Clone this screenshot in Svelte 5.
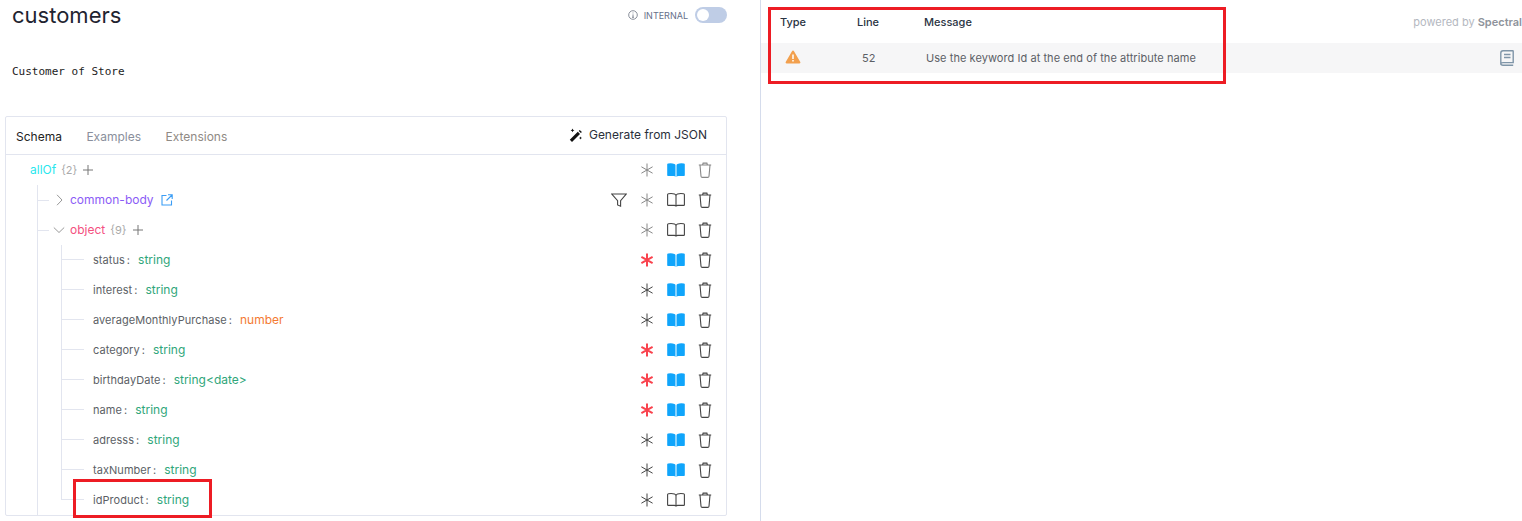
<script>
	const props = [
		{ name: 'status', type: 'string', required: true, described: true },
		{ name: 'interest', type: 'string', described: true },
		{ name: 'averageMonthlyPurchase', type: 'number', described: true },
		{ name: 'category', type: 'string', required: true, described: true },
		{ name: 'birthdayDate', type: 'string<date>', required: true, described: true },
		{ name: 'name', type: 'string', required: true, described: true },
		{ name: 'adresss', type: 'string', described: true },
		{ name: 'taxNumber', type: 'string', described: true },
		{ name: 'idProduct', type: 'string' }
	];
</script>

{#snippet asterisk(required = false, light = false)}
	<svg class="ico" class:red={required} class:light viewBox="0 0 16 16" width="16" height="16" fill="none" stroke="currentColor" stroke-width={required ? 2 : 1}>
		<path d="M8 1.500v13M2.400 4.800l11.200 6.400M13.600 4.800L2.400 11.200" />
	</svg>
{/snippet}

{#snippet book(filled = false)}
	<svg class="ico" class:blue={filled} viewBox="0 0 18 16" width="18" height="16">
		{#if filled}
			<path fill="currentColor" d="M1.200 1.500Q5 1 7.500 2q1 .4 1 1.400V15q-.5-1-1.800-1H1q-.8 0-.8-.8V2.300q0-.7 1-.8zM16.800 1.500Q13 1 10.500 2q-1 .4-1 1.400V15q.5-1 1.800-1H17q.8 0 .8-.8V2.300q0-.7-1-.8z" />
		{:else}
			<path fill="none" stroke="currentColor" stroke-width="1.100" d="M1.500 1.700q4-.4 6 .3 1.500.5 1.500 2v10.400q-.4-1-1.700-1H1.300q-.7 0-.7-.7V2.500q0-.7.900-.8zM16.500 1.700q-4-.4-6 .3Q9 2.500 9 4v10.400q.4-1 1.700-1h6q.7 0 .7-.7V2.500q0-.7-.9-.8z" />
		{/if}
	</svg>
{/snippet}

{#snippet trash(light = false)}
	<svg class="ico" class:light viewBox="0 0 14 16" width="14" height="16" fill="none" stroke="currentColor" stroke-width="1.100">
		<path d="M.8 3h12.400M4.600 3l.5-1.900h3.800L9.400 3M2 3l1 11.200q.1 1.200 1.300 1.200h5.400q1.200 0 1.300-1.200L12 3" />
	</svg>
{/snippet}

{#snippet actions(required, described, lightTrash = false, lightStar = false)}
	<div class="actions">
		<span class="act">{@render asterisk(required, lightStar)}</span>
		<span class="act">{@render book(described)}</span>
		<span class="act">{@render trash(lightTrash)}</span>
	</div>
{/snippet}

<div class="page">
	<section class="left">
		<header class="title-row">
			<h1>customers</h1>
			<div class="internal">
				<svg viewBox="0 0 10 10" width="10" height="10" fill="none" stroke="#6b7280" stroke-width=".8">
					<circle cx="5" cy="5" r="4.300" />
					<path d="M5 4.400v2.800M4 7.300h2M5 2.500v.9" />
				</svg>
				<span>INTERNAL</span>
				<span class="toggle"><i></i></span>
			</div>
		</header>
		<p class="desc">Customer of Store</p>

		<div class="card">
			<div class="tabs">
				<span class="tab on">Schema</span>
				<span class="tab">Examples</span>
				<span class="tab ext">Extensions</span>
				<span class="gen">
					<svg viewBox="0 0 14 14" width="14" height="14" fill="#111">
						<path d="M.8 11.800L8.800 3.800l2.200 2.200-8 8zM9.700 2.900l1-1 2.200 2.200-1 1z" />
						<path d="M3.500.5l.6 1.300 1.300.6-1.300.6-.6 1.300-.6-1.300-1.300-.6 1.300-.6zM11.500 8.500l.5 1 1 .5-1 .5-.5 1-.5-1-1-.5 1-.5z" />
					</svg>
					Generate from JSON
				</span>
			</div>

			<div class="tree">
				<div class="row root">
					<span class="allof label">allOf</span>
					<span class="count">{'{2}'}</span>
					<svg class="plus" viewBox="0 0 10 10" width="10" height="10"><path d="M5 0v10M0 5h10" stroke="#777" fill="none" /></svg>
					{@render actions(false, true, true, true)}
				</div>

				<div class="level1">
					<div class="row">
						<span class="dash"></span>
						<svg class="chev" viewBox="0 0 12 12" width="12" height="12"><path d="M4 .8l5 5.200-5 5.200" stroke="#999" fill="none" /></svg>
						<span class="ref label">common-body</span>
						<svg class="ext-link" viewBox="0 0 12 12" width="12" height="12" fill="none" stroke="#3b9df5" stroke-width="1.100">
							<path d="M5.500 1.500H1v9.500h9.500V6.500M7 .8h4.200V5M11 1L5.500 6.500" />
						</svg>
						<svg class="funnel" viewBox="0 0 16 14" width="16" height="14" fill="none" stroke="#444" stroke-width="1.100">
							<path d="M.8 1h14.400L9.600 7.600v5.600L6.600 12V7.600z" />
						</svg>
						{@render actions(false, false, false, true)}
					</div>
					<div class="row">
						<span class="dash"></span>
						<svg class="chev" viewBox="0 0 12 12" width="12" height="12"><path d="M.8 3.500L6 8.500l5.200-5" stroke="#999" fill="none" /></svg>
						<span class="obj label">object</span>
						<span class="count">{'{9}'}</span>
						<svg class="plus" viewBox="0 0 10 10" width="10" height="10"><path d="M5 0v10M0 5h10" stroke="#777" fill="none" /></svg>
						{@render actions(false, false, false, true)}
					</div>

					<div class="level2">
						{#each props as p, i}
							<div class="row prop">
								<span class="branch" class:last={i === props.length - 1}></span>
								<span class="key">{p.name}<span class="colon">:</span></span>
								<span class="type label" class:num={p.type === 'number'}>{p.type}</span>
								{@render actions(p.required, p.described)}
							</div>
						{/each}
					</div>
				</div>
			</div>
		</div>
	</section>

	<section class="right">
		<div class="table-head">
			<span class="th type-col">Type</span>
			<span class="th line-col">Line</span>
			<span class="th">Message</span>
			<span class="powered">powered by <b>Spectral</b></span>
		</div>
		<div class="issue">
			<span class="warn">
				<svg viewBox="0 0 16 14" width="16" height="14">
					<path fill="#f2a04e" d="M8 .6q.7 0 1 .6l6.300 10.900q.6 1.300-.9 1.400H1.600q-1.500-.1-.9-1.400L7 1.200q.3-.6 1-.6z" />
					<path stroke="#fff" stroke-width="1.500" d="M8 4.500v4.400M8 10v1.500" />
				</svg>
			</span>
			<span class="lineno">52</span>
			<span class="msg">Use the keyword Id at the end of the attribute name</span>
			<svg class="doc" viewBox="0 0 14 16" width="14" height="16" fill="none" stroke="#7f95a8" stroke-width="1.400">
				<path d="M3 .8h9.800q.4 0 .4.400v11.400H3q-2.200 0-2.200 1.200V3Q.8.800 3 .8zM.8 13.800q0 1.400 2.200 1.400h10.200M4 4.500h6.500M4 7.500h6.500" />
			</svg>
		</div>
	</section>

	<div class="mark mark-issue"></div>
	<div class="mark mark-prop"></div>
</div>

<style>
	:global(body) {
		margin: 0;
		background: #fff;
		overflow: hidden;
	}
	.page {
		position: relative;
		display: flex;
		width: 1522px;
		height: 521px;
		overflow: hidden;
		font-family: Inter, "Liberation Sans", sans-serif;
		color: #555;
	}
	.left {
		width: 761px;
		flex: none;
		box-sizing: border-box;
		border-right: 1px solid #d5dcec;
		height: 521px;
	}
	.title-row {
		display: flex;
		justify-content: space-between;
		align-items: flex-start;
		padding: 0 33px 0 12px;
		height: 33px;
	}
	h1 {
		margin: 0;
		font-size: 22px;
		line-height: 30px;
		font-weight: 400;
		color: #1f2430;
	}
	.internal {
		display: flex;
		align-items: center;
		margin-top: 7px;
		font-size: 9px;
		color: #66708a;
		height: 16px;
	}
	.internal svg {
		margin-right: 6px;
	}
	.toggle {
		display: block;
		width: 32px;
		height: 16px;
		margin-left: 7px;
		border-radius: 8px;
		background: #bfcde6;
		box-sizing: border-box;
		padding: 2px;
	}
	.toggle i {
		display: block;
		width: 12px;
		height: 12px;
		border-radius: 50%;
		background: #fff;
	}
	.desc {
		margin: 0;
		padding: 31px 0 0 12px;
		height: 83px;
		box-sizing: border-box;
		font-family: "DejaVu Sans Mono", "Liberation Mono", monospace;
		font-size: 11px;
		line-height: 16px;
		color: #222;
	}
	.card {
		margin: 0 33px 0 5px;
		height: 400px;
		box-sizing: border-box;
		border: 1px solid #e2e5ef;
		border-radius: 2px;
	}
	.tabs {
		display: flex;
		align-items: center;
		height: 37px;
		padding: 0 19px 0 10px;
		border-bottom: 1px solid #e2e5ef;
		font-size: 12px;
	}
	.tab {
		color: #8a8f9c;
		margin: 2px 24.500px 0 0;
	}
	.tab.on {
		color: #222;
	}
	.tab.ext {
		color: #8f8a84;
	}
	.gen {
		display: flex;
		align-items: center;
		gap: 6px;
		margin-left: auto;
		color: #2a2f3a;
		margin-top: -2px;
	}
	.tree {
		font-size: 12px;
	}
	.row {
		display: flex;
		align-items: center;
		height: 30px;
	}
	.root {
		padding-left: 24px;
	}
	.label {
		margin-bottom: 2px;
	}
	.allof {
		color: #2ae7ee;
		margin-right: 5px;
	}
	.count {
		color: #aaa;
		font-size: 11px;
		margin-right: 7px;
	}
	.root .count {
		margin-right: 6px;
	}
	.plus {
		flex: none;
	}
	.level1 {
		margin-left: 31px;
		border-left: 1px solid #e2e5ef;
	}
	.dash {
		width: 11px;
		border-top: 1px solid #e2e5ef;
		flex: none;
	}
	.chev {
		margin: 0 5px 0 4px;
		flex: none;
	}
	.ref {
		color: #8b5cf6;
	}
	.ext-link {
		margin-left: 7px;
	}
	.obj {
		color: #f4507f;
		margin-right: 5px;
	}
	.funnel {
		margin-left: auto;
		margin-right: -1px;
	}
	.actions {
		display: flex;
		margin-left: auto;
		padding-right: 7px;
	}
	.funnel + .actions {
		margin-left: 6px;
	}
	.act {
		display: flex;
		justify-content: center;
		width: 29px;
	}
	.ico {
		display: block;
		color: #444;
	}
	.ico.light {
		color: #888;
	}
	.ico.red {
		color: #f9434e;
	}
	.ico.blue {
		color: #10a5fb;
	}
	.level2 {
		margin-left: 23px;
	}
	.branch {
		align-self: stretch;
		width: 23px;
		margin-right: 9px;
		flex: none;
	}
	.branch::before {
		content: "";
		display: block;
		box-sizing: border-box;
		height: 50%;
		border-left: 1px solid #e2e5ef;
		border-bottom: 1px solid #e2e5ef;
	}
	.branch::after {
		content: "";
		display: block;
		height: 50%;
		border-left: 1px solid #e2e5ef;
	}
	.branch.last::after {
		border-left: 0;
	}
	.key {
		font-size: 11px;
		color: #5c5f66;
		margin-right: 8px;
		letter-spacing: .05px;
	}
	.colon {
		margin-left: 2px;
	}
	.type {
		color: #2fa67a;
	}
	.type.num {
		color: #f47a32;
	}
	.right {
		flex: 1;
	}
	.table-head {
		display: flex;
		align-items: center;
		height: 43px;
		padding-left: 19px;
		font-size: 11px;
	}
	.th {
		font-weight: 500;
		color: #2a3342;
	}
	.type-col {
		width: 77px;
	}
	.line-col {
		width: 67px;
	}
	.powered {
		margin-left: auto;
		color: #b4b8bf;
	}
	.powered b {
		color: #8e939b;
		font-weight: 600;
	}
	.issue {
		display: flex;
		align-items: center;
		height: 30px;
		background: #f6f6f7;
		padding-left: 24px;
		font-size: 11px;
		color: #5c5f66;
	}
	.warn {
		width: 77px;
		margin-top: -2px;
	}
	.warn svg {
		display: block;
	}
	.lineno {
		width: 64px;
	}
	.msg {
		letter-spacing: .06px;
	}
	.doc {
		margin-left: auto;
		margin-right: 8px;
	}
	.mark {
		position: absolute;
		box-sizing: border-box;
		border: 3px solid #ed1c24;
		pointer-events: none;
	}
	.mark-issue {
		left: 768px;
		top: 7px;
		width: 458px;
		height: 77px;
	}
	.mark-prop {
		left: 73px;
		top: 479px;
		width: 139px;
		height: 39px;
	}
</style>
